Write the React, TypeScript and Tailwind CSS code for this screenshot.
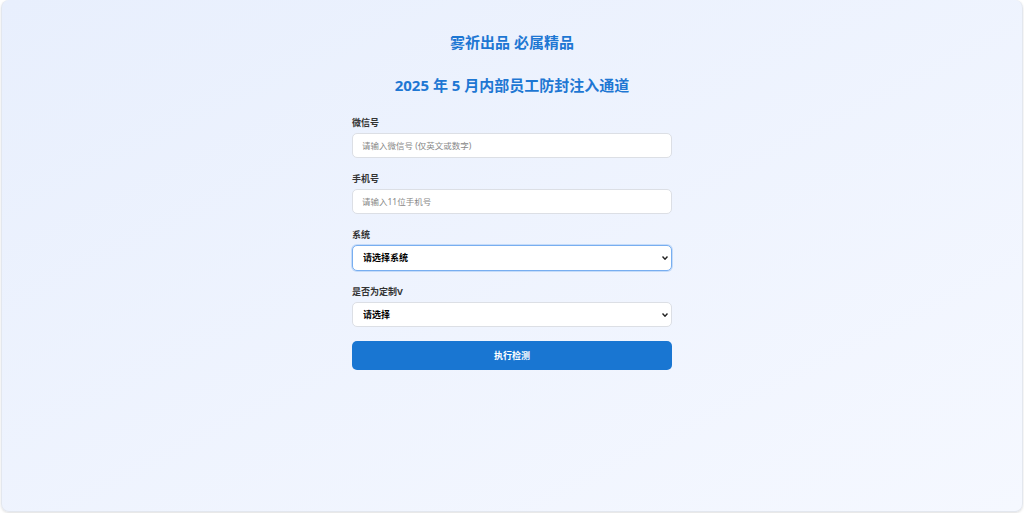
import React from 'react';

const font = { fontFamily: '"Noto Sans", "Noto Sans CJK SC", sans-serif' };

function Field({ label, children }: { label: string; children: React.ReactNode }) {
  return (
    <div className="flex flex-col">
      <label className="text-[9px] leading-[12px] font-bold text-[#333] mb-[4px]">{label}</label>
      {children}
    </div>
  );
}

function Select({ text, focused }: { text: string; focused?: boolean }) {
  return (
    <div className="relative">
      <select
        className={
          focused
            ? 'block w-full h-[26px] appearance-none rounded-[5px] border border-[#78aef0] shadow-[0_0_0_1px_rgba(120,174,240,0.35)] bg-white pl-[10px] text-[9px] font-semibold text-black outline-none'
            : 'block w-full h-[25px] appearance-none rounded-[5px] border border-[#dcdfe5] bg-white pl-[10px] text-[9px] font-semibold text-black outline-none'
        }
      >
        <option>{text}</option>
      </select>
      <svg
        className="absolute right-[4px] top-1/2 -translate-y-1/2 pointer-events-none"
        width="6"
        height="5"
        viewBox="0 0 6 5"
      >
        <path d="M0.5 1 L3 3.8 L5.5 1" fill="none" stroke="#222" strokeWidth="1.4" />
      </svg>
    </div>
  );
}

export default function App() {
  return (
    <div className="w-screen h-[513px] bg-white px-[1px] pb-[1px]" style={font}>
      <div className="h-full rounded-lg border border-[#e3e7ee] border-t-0 shadow-sm bg-gradient-to-br from-[#e8effd] to-[#f5f8ff] flex flex-col items-center">
        <h1 className="mt-[32px] text-[15px] leading-[20px] font-bold text-[#1e77d3]">雾祈出品 必属精品</h1>
        <h2 className="mt-[23px] text-[15px] leading-[20px] font-bold text-[#1e77d3]">2025 年 5 月内部员工防封注入通道</h2>
        <form className="w-[320px] mt-[22px] flex flex-col gap-[15px]">
          <Field label="微信号">
            <input
              className="h-[25px] rounded-[5px] border border-[#dcdfe5] bg-white px-[9px] text-[8.5px] placeholder:text-[#888] outline-none"
              placeholder="请输入微信号 (仅英文或数字)"
            />
          </Field>
          <Field label="手机号">
            <input
              className="h-[25px] rounded-[5px] border border-[#dcdfe5] bg-white px-[9px] text-[8.5px] placeholder:text-[#888] outline-none"
              placeholder="请输入11位手机号"
            />
          </Field>
          <Field label="系统">
            <Select text="请选择系统" focused />
          </Field>
          <Field label="是否为定制V">
            <Select text="请选择" />
          </Field>
          <button
            type="button"
            className="mt-[-1px] h-[29px] rounded-[5px] bg-[#1976d2] text-white text-[9px] font-bold"
          >
            执行检测
          </button>
        </form>
      </div>
    </div>
  );
}
